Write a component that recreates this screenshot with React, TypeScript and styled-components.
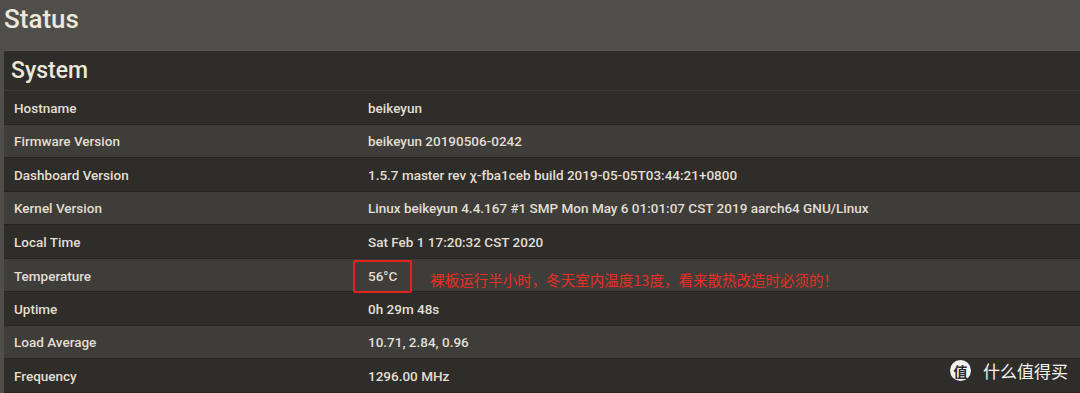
import React from 'react';
import styled, { createGlobalStyle } from 'styled-components';

const GlobalStyle = createGlobalStyle`
  html, body {
    margin: 0;
    padding: 0;
    background: #4f4e4a;
    overflow: hidden;
  }
  body {
    font-family: Roboto, 'Noto Sans', sans-serif;
    color: #e4e0d4;
  }
`;

const Page = styled.div`
  position: relative;
  width: 1080px;
  height: 393px;
  overflow: hidden;
  padding-left: 4px;
  box-sizing: border-box;
`;

const Title = styled.h1`
  margin: 0;
  height: 50px;
  padding-top: 4px;
  box-sizing: border-box;
  font-size: 26px;
  font-weight: 500;
  line-height: 30px;
  color: #ebe7da;
`;

const Panel = styled.section`
  background: #2e2d29;
  border-top: 1px solid #57564f;
`;

const PanelHeader = styled.h2`
  margin: 0;
  height: 39px;
  padding-left: 7px;
  font-size: 23px;
  font-weight: 500;
  line-height: 40px;
  color: #ebe7da;
  border-bottom: 1px solid #3c3b37;
`;

const Row = styled.div<{ shaded: boolean }>`
  display: grid;
  grid-template-columns: 354px 1fr;
  align-items: center;
  height: 33.5px;
  box-sizing: border-box;
  padding-left: 10px;
  padding-top: 1px;
  background: ${({ shaded }) => (shaded ? '#3e3d39' : '#2e2d29')};
  border-bottom: 1px solid #262521;
  font-size: 13.5px;
  font-weight: 500;
  color: #e2ded2;
`;

const Value = styled.div`
  display: flex;
  align-items: center;
  height: 100%;
`;

const Highlight = styled.span`
  display: inline-flex;
  align-items: center;
  height: 33px;
  margin-left: -15px;
  padding: 0 13px;
  box-sizing: border-box;
  border: 2px solid #e3231c;
  border-radius: 2px;
`;

const Note = styled.span`
  margin-left: 18px;
  margin-top: 7px;
  font-family: 'Noto Sans CJK SC', sans-serif;
  font-size: 14.5px;
  font-weight: 400;
  color: #ec2d24;
`;

const Watermark = styled.div`
  position: absolute;
  right: 12px;
  bottom: 10px;
  display: flex;
  align-items: center;
  gap: 12px;
  color: #f4f4f4;
  font-family: 'Noto Sans CJK SC', sans-serif;
  font-size: 17px;
`;

const Badge = styled.span`
  display: inline-flex;
  align-items: center;
  justify-content: center;
  width: 21px;
  height: 21px;
  border-radius: 50%;
  background: #f2f2f2;
  color: #2e2d29;
  font-size: 14px;
  font-weight: 700;
`;

const rows: [string, string][] = [
  ['Hostname', 'beikeyun'],
  ['Firmware Version', 'beikeyun 20190506-0242'],
  ['Dashboard Version', '1.5.7 master rev χ-fba1ceb build 2019-05-05T03:44:21+0800'],
  ['Kernel Version', 'Linux beikeyun 4.4.167 #1 SMP Mon May 6 01:01:07 CST 2019 aarch64 GNU/Linux'],
  ['Local Time', 'Sat Feb 1 17:20:32 CST 2020'],
  ['Temperature', '56°C'],
  ['Uptime', '0h 29m 48s'],
  ['Load Average', '10.71, 2.84, 0.96'],
  ['Frequency', '1296.00 MHz'],
];

const App: React.FC = () => (
  <Page>
    <GlobalStyle />
    <Title>Status</Title>
    <Panel>
      <PanelHeader>System</PanelHeader>
      {rows.map(([label, value], idx) => (
        <Row key={label} shaded={idx % 2 === 1}>
          <div>{label}</div>
          <Value>
            {label === 'Temperature' ? (
              <>
                <Highlight>{value}</Highlight>
                <Note>裸板运行半小时，冬天室内温度13度，看来散热改造时必须的！</Note>
              </>
            ) : (
              value
            )}
          </Value>
        </Row>
      ))}
    </Panel>
    <Watermark>
      <Badge>值</Badge>
      <span>什么值得买</span>
    </Watermark>
  </Page>
);

export default App;
